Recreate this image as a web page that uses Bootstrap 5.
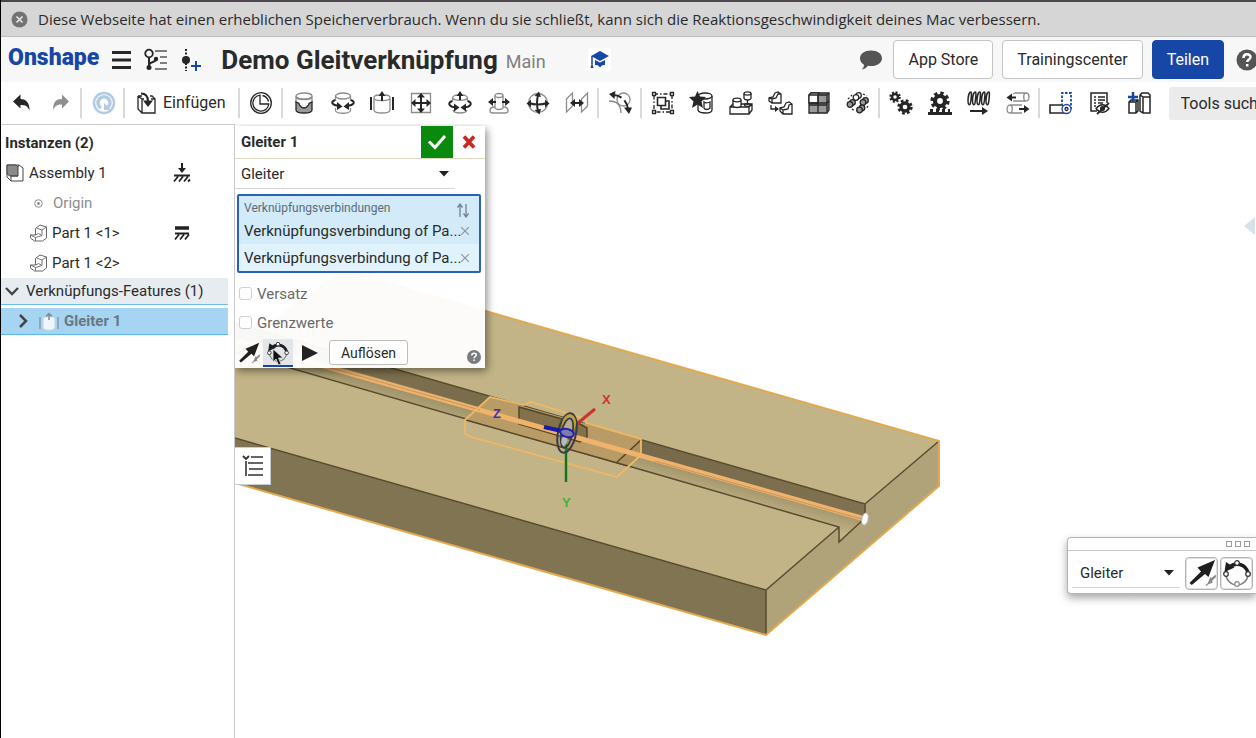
<!DOCTYPE html>
<html lang="de">
<head>
<meta charset="utf-8">
<meta name="viewport" content="width=device-width, initial-scale=1">
<title>Demo Gleitverknüpfung – Onshape</title>
<link href="https://cdn.jsdelivr.net/npm/bootstrap@5.3.0/dist/css/bootstrap.min.css" rel="stylesheet">
<style>
  :root { --ink: #2a2a2a; --blue: #1747a6; --line: #c9c9c9; }
  body { font-family: Roboto, "Liberation Sans", sans-serif; font-size: 15px; line-height: 20px; color: var(--ink); border-left: 1px solid #000; }
  svg { display: block; flex: none; fill: none; }
  button { color: inherit; }
  .ico { width: 24px; height: 24px; overflow: visible; stroke: #262626; stroke-width: 1.3; }
  .ico .g { stroke: #8c8c8c; }
  .ico .b { stroke: var(--blue); }
  .ico .f { fill: #262626; stroke: none; }
  .ico .w { fill: #fff; }
  .ico .s { fill: #9a9a9a; }
  .ico .k { stroke-width: 2; }
  .bare { border: 0; background: none; padding: 0; }

  .notice { border-top: 2px solid #4b474b; border-bottom: 1px solid #bdbdbd; background: #d6d6d6; height: 37px; font-family: "Open Sans", "Liberation Sans", sans-serif; font-size: 15px; padding-left: 10px; gap: 10px; }
  .topbar { background: #f7f7f7; height: 45px; padding-left: 7px; }
  .brand { font-weight: 900; font-size: 23px; line-height: 28px; padding-bottom: 4px; color: var(--blue); text-decoration: none; }
  .menu-btns { gap: 12px; margin-left: 13px; }
  .doc-title { font-size: 26px; line-height: 32px; font-weight: 700; margin-left: 17px; }
  .branch { font-size: 18px; color: #808080; }
  .top-actions { gap: 9px; }
  .top-btn { font-size: 16px; line-height: 24px; height: 39px; padding: 0 14px; border: 1px solid #c4c4c4; border-radius: 4px; background: #fff; color: var(--ink); }
  .top-btn.main { background: var(--blue); border-color: var(--blue); color: #fff; }
  .help-btn { padding-left: 3px; }
  .cap { width: 23px; height: 23px; background: #fff; border-radius: 3px; margin-left: 42px; }

  .tools { height: 42px; background: #fff; padding-left: 1px; }
  .tool { width: 39px; height: 36px; flex: none; }
  .tool-wide { width: auto; padding: 0 12px 0 8px; gap: 4px; font-size: 16px; }
  .sep { width: 4px; height: 30px; flex: none; border-left: 2px solid #d9d9d9; }
  .find { min-width: 0; height: 33px; margin-left: 10px; padding: 0 0 0 12px; border: 0; border-radius: 3px 0 0 3px; background: #ebebeb; font-size: 16px; }
  .find::placeholder { color: var(--ink); opacity: 1; }

  .side { width: 234px; flex: none; border-top: 1px solid var(--line); border-right: 1px solid var(--line); background: #fff; padding-top: 2px; }
  .tree-row { height: 30px; margin-right: 6px; }
  .tree-row.head { height: 31px; }
  .tree-row.inner { padding-left: 28px; }
  .tree-row.origin { padding-left: 33px; gap: 10px; }
  .tree-row.section { height: 27px; background: #e7ecf1; border-bottom: 1px solid #6cbef0; padding-left: 3px; gap: 6px; }
  .tree-row.picked { height: 27px; background: #a5d5f3; border-bottom: 1px solid #5ab9ea; margin-top: 3px; padding-left: 15px; gap: 5px; font-weight: 700; color: #6a7681; }
  .tree-row .mark-end { margin-left: auto; margin-right: 37px; }
  .dim { color: #8d8d8d; }

  .stage { min-width: 0; background: #fff; }
  .scene { width: 100%; height: 100%; }
  .scene text { font-family: "Liberation Sans", sans-serif; font-weight: 700; font-size: 13px; }

  .dialog { left: 0; top: 2px; width: 250px; background: rgba(255,255,255,.95); box-shadow: 2px 3px 8px rgba(0,0,0,.45); font-size: 15px; }
  .dialog-head { height: 33px; border-bottom: 1px solid #e3d9c2; padding-left: 6px; font-weight: 700; }
  .ok-btn { width: 32px; height: 32px; background: #0a8a0d; }
  .no-btn { width: 32px; height: 32px; }
  .pick { border: 0; border-bottom: 1px solid #d6d6d6; border-radius: 0; background: transparent; appearance: none; color: var(--ink); font-size: 15px; line-height: 20px; width: 100%; }
  .pick-wrap .caret { position: absolute; right: 6px; top: 50%; margin-top: -3px; pointer-events: none; }
  .dialog .pick-wrap { width: 220px; }
  .dialog .pick { height: 30px; padding: 0 20px 0 6px; }
  .picks { margin: 5px 4px 0 2px; border: 2px solid #2c5fb8; border-radius: 2px; background: #d3ebf9; }
  .picks-head { font-size: 12px; line-height: 20px; height: 21px; padding: 3px 10px 0 5px; color: #5d6a75; }
  .picks-row { height: 27px; padding: 0 10px 0 5px; white-space: nowrap; }
  .picks-row.alt { background: #e0f3fd; }
  .opts { margin-top: 6px; }
  .opt { height: 29px; padding-left: 4px; gap: 5px; color: #696969; }
  .opt .form-check-input { width: 13px; height: 13px; margin: 0; border-color: #cfcfcf; border-radius: 3px; }
  .foot { height: 31px; }
  .foot-btn { width: 28px; height: 28px; }
  .foot-btn.on { background: #e2e5ea; border-bottom: 2px solid var(--blue); width: 30px; }
  .pointer { left: 9px; top: 9px; }
  .play-btn { margin: 0 11px 0 9px; }
  .solve { height: 25px; padding: 0 11px; border: 1px solid #bdbdbd; border-radius: 3px; background: #fff; font-size: 14px; }
  .list-tab { left: 0; top: 323px; width: 36px; height: 38px; background: #fff; border: 1px solid #c8ccd4; border-left: 0; }
  .collapse-tab { right: 1px; top: 93px; }
  .floater { right: 0; bottom: 144px; width: 189px; background: #fff; border: 1px solid #b5b5b5; border-right: 0; border-radius: 4px 0 0 4px; box-shadow: 0 4px 9px rgba(0,0,0,.35); }
  .grip { height: 13px; border-bottom: 1px solid #c6c6c6; gap: 3px; padding-right: 6px; }
  .grip i { width: 6px; height: 6px; border: 1px solid #9a9a9a; }
  .floater-body { height: 42px; padding: 2px 0 0 4px; gap: 2px; }
  .floater .pick-wrap { width: 108px; margin-right: 3px; }
  .floater .pick { height: 30px; padding: 0 20px 0 8px; }
  .sq-btn { width: 33px; height: 33px; flex: none; border: 1px solid #b4b4b4; border-radius: 4px; background: #fff; box-shadow: inset 0 0 0 1px #e2e2e2; }
</style>
</head>
<body class="vh-100 d-flex flex-column overflow-hidden">

<svg width="0" height="0" class="position-absolute" aria-hidden="true">
  <symbol id="part" viewBox="0 0 18 18"><path d="M1 11h5V4.500L10.500 1 17 3v11l-4 3H5L1 14z" fill="#fff" stroke="#666"/><path d="M1 11l5 2.500 6.500-2V6L17 3M12.500 6L7 4M6 13.500V17M6 11l3-1.500 3.500 2" stroke="#777"/></symbol>
  <symbol id="drag" viewBox="0 0 28 28"><path d="M1.500 24L13 12.500 9.500 8.500 27 1l-6.500 17L17 15 3.800 26z" fill="#1f1f1f"/><path d="M27.500 15.500l-4 3.500-1-1-3 6.500-2 1.500 1 1 1.500-1.500 5-2-1-1.500 4-4z" fill="#8a8a8a"/></symbol>
  <symbol id="spin" viewBox="0 0 28 28"><circle cx="14" cy="15" r="11" stroke="#808080" stroke-width="1.500" fill="none"/><path d="M6 9A11 11 0 0 1 25 14" stroke="#1f1f1f" stroke-width="3.500" fill="none"/><path d="M1.500 13L3 3l8.500 5.500z" fill="#1f1f1f"/><g fill="#fff" stroke="#333" stroke-width="1.200"><circle cx="14" cy="4" r="2.300"/><circle cx="25" cy="15" r="2.300"/><circle cx="3" cy="15" r="2.300"/><circle cx="14" cy="25" r="2.300" stroke="#888"/></g></symbol>
  <symbol id="gear" viewBox="-12 -12 24 24"><circle r="6" fill="none" stroke="#262626" stroke-width="5"/><circle r="9.300" fill="none" stroke="#262626" stroke-width="4.500" stroke-dasharray="3.950 3.350"/></symbol>
</svg>

<div class="notice d-flex align-items-center flex-shrink-0" role="status">
  <button class="bare" aria-label="Hinweis schließen"><svg width="17" height="17" viewBox="0 0 17 17"><circle cx="8.500" cy="8.500" r="8" fill="#737373"/><path d="M5.500 5.500l6 6M11.500 5.500l-6 6" stroke="#e8e8e8" stroke-width="1.600"/></svg></button>
  <span class="text-nowrap">Diese Webseite hat einen erheblichen Speicherverbrauch. Wenn du sie schließt, kann sich die Reaktionsgeschwindigkeit deines Mac verbessern.</span>
</div>

<header class="topbar d-flex align-items-center flex-shrink-0">
  <a href="#" class="brand">Onshape</a>
  <div class="menu-btns d-flex align-items-center">
    <button class="bare" aria-label="Menü"><svg width="20" height="20" viewBox="0 0 20 20"><path d="M0 2.500h19M0 10h19M0 17.500h19" stroke="#262626" stroke-width="3"/></svg></button>
    <button class="bare" aria-label="Versionen"><svg class="ico" viewBox="0 0 24 24"><circle cx="5" cy="5.500" r="3.800" stroke-width="1.800"/><path class="k" d="M5 9v10M5 17c1-4 7-2 7-6"/><circle class="f" cx="5" cy="19.500" r="2.500"/><circle class="f" cx="12" cy="11" r="2.200"/><path stroke-width="1.600" stroke="#555" d="M11 3h12M16 9h7M16 15h7M11 21h12"/></svg></button>
    <button class="bare" aria-label="Version erstellen"><svg class="ico" viewBox="0 0 24 24"><path class="k" stroke-dasharray="2 1.500" d="M6 1v22"/><circle class="f" cx="6" cy="12" r="4"/><path class="b k" d="M16 13v10M11 18h10"/></svg></button>
  </div>
  <span class="doc-title text-nowrap">Demo Gleitverknüpfung</span>
  <span class="branch ms-2 pt-1">Main</span>
  <button class="bare cap d-flex align-items-center justify-content-center" aria-label="Lernen"><svg width="20" height="18" viewBox="0 0 20 18"><path d="M11 0l9 5-9 5-9-5z" fill="#1747a6"/><path d="M6 9v5c2 0 3 0 5 2.500 2-2.500 3-2.500 5-2.500V9l-5 2.500z" fill="#1747a6"/><path d="M3 5v8" stroke="#1747a6" stroke-width="1.500"/><path d="M3 11l1.500 6h-3z" fill="#1747a6"/></svg></button>
  <div class="top-actions d-flex align-items-center ms-auto flex-shrink-0">
    <button class="bare" aria-label="Kommentare"><svg width="26" height="22" viewBox="0 0 26 22"><path d="M13 1.500c6.500 0 11 3.300 11 7.800s-4.500 7.800-11 7.800c-1 0-2-.1-3-.3-1.500 2-3.500 3.300-6 3.700 1.300-1.500 2-3 2-4.700C3.500 14.300 2 12 2 9.300 2 4.800 6.500 1.500 13 1.500z" fill="#555"/></svg></button>
    <button class="btn top-btn">App Store</button>
    <button class="btn top-btn">Trainingscenter</button>
    <button class="btn top-btn main">Teilen</button>
    <button class="bare help-btn" aria-label="Hilfe"><svg width="20" height="22" viewBox="0 0 20 22"><circle cx="11" cy="11" r="10.500" fill="#555"/><path d="M7.500 9c0-5 7-4.500 7-1 0 2.500-3.300 2.500-3.300 5M11.200 15v2.500" stroke="#fff" stroke-width="2.500"/></svg></button>
  </div>
</header>

<nav class="tools d-flex align-items-center flex-shrink-0" aria-label="Werkzeuge">
  <button class="bare tool d-flex align-items-center justify-content-center" aria-label="Rückgängig"><svg class="ico" viewBox="0 0 24 24"><path class="f" d="M3 10.500L10.500 3.500V8c6 0 9 4 9 11.500-2-4.500-4-5.500-9-5.500v3.500z"/></svg></button>
  <button class="bare tool d-flex align-items-center justify-content-center" aria-label="Wiederholen"><svg class="ico" viewBox="0 0 24 24"><path fill="#8f8f8f" stroke="none" d="M20 10.500L13 3.500v4.500c-6 0-9 3-9 11 2-4 4-5.500 9-5.500v4z"/></svg></button>
  <span class="sep"></span>
  <button class="bare tool d-flex align-items-center justify-content-center" aria-label="Aktualisieren"><svg class="ico" viewBox="0 0 24 24"><circle cx="12" cy="12" r="10" stroke="#b2cbe2" stroke-width="2.500"/><path d="M9 17a6 6 0 1 1 6 0" stroke="#b2cbe2" stroke-width="3.500"/><path d="M12 12v7h7z" fill="#b2cbe2" stroke="none"/></svg></button>
  <span class="sep"></span>
  <button class="bare tool tool-wide d-flex align-items-center"><svg class="ico" viewBox="0 0 24 24"><path d="M3 5v13l4 4h13V8l-3-3h-2M3 5l4 3v14M3 5h4M7 8h2M16 8h4"/><path class="k" d="M6 2.500c5 0 7 3 7 8"/><path class="f" d="M8 9.500h10L13 16z"/></svg>Einfügen</button>
  <span class="sep"></span>
  <button class="bare tool d-flex align-items-center justify-content-center" aria-label="Verknüpfung"><svg class="ico" viewBox="0 0 24 24"><circle cx="12" cy="12" r="10.300"/><path d="M11 4.200a8 8 0 1 0 8.800 8.800H11z"/><path d="M13.500 4.500a8 8 0 0 1 6 6"/></svg></button>
  <span class="sep"></span>
  <button class="bare tool d-flex align-items-center justify-content-center" aria-label="Befestigt"><svg class="ico" viewBox="0 0 24 24"><path class="g" d="M4 5v7M20 5v7M4 6c0 3.500 16 3.500 16 0"/><ellipse class="g" cx="12" cy="5" rx="8" ry="3"/><path class="s" d="M4 11v8c0 4 16 4 16 0v-8l-3 1.500c0 2-1 2-2 3-1 2-5 2-6 0-1-1-2-1-2-3z"/></svg></button>
  <button class="bare tool d-flex align-items-center justify-content-center" aria-label="Drehen"><svg class="ico" viewBox="0 0 24 24"><g class="g"><ellipse cx="12" cy="5" rx="7.500" ry="3"/><path d="M4.500 5v5M19.500 5v5M4.500 17v3c2 3 13 3 15 0v-3"/></g><path class="k" d="M4 9c-5 2-3 5 4 6M20 9c5 2 3 5-4 6"/><path class="f" d="M6 11v8l5.500-3.500zM18 11v8l-5.500-3.500z"/></svg></button>
  <button class="bare tool d-flex align-items-center justify-content-center" aria-label="Gleiter"><svg class="ico" viewBox="0 0 24 24"><path class="g" d="M9 4c-3 0-5 1-5 3v12c0 4 16 4 16 0V7c0-2-2-3-5-3M4 7c0 3.500 16 3.500 16 0"/><path class="k" d="M1 6v13M23 6v13M12 3v7"/><path class="f" d="M8.500 5L12 0l3.500 5z"/></svg></button>
  <button class="bare tool d-flex align-items-center justify-content-center" aria-label="Planar"><svg class="ico" viewBox="0 0 24 24"><path class="g" d="M2.500 2.500h19v19h-19z"/><path class="k" d="M12 5v14M5 12h14"/><path class="f" d="M8 6.500L12 2l4 4.500zM8 17.500l4 4.500 4-4.500zM6.500 8L2 12l4.500 4zM17.500 8l4.500 4-4.500 4z"/></svg></button>
  <button class="bare tool d-flex align-items-center justify-content-center" aria-label="Zylindrisch"><svg class="ico" viewBox="0 0 24 24"><g class="g"><path d="M4.500 11V7c0-2 3-3 5-3M19.500 11V7c0-2-3-3-5-3M4.500 7c1 3 14 3 15 0M5 19c1 4 13 4 14 0"/></g><path class="k" d="M4 10c-5 2-3 6 4 6.500M20 10c5 2 3 6-4 6.500M12 4v5"/><path class="f" d="M6 12.500v8l5.500-4zM18 12.500v8l-5.500-4zM8.500 5L12 0l3.500 5z"/></svg></button>
  <button class="bare tool d-flex align-items-center justify-content-center" aria-label="Stiftschlitz"><svg class="ico" viewBox="0 0 24 24"><g class="g"><ellipse cx="12" cy="4.500" rx="4" ry="2"/><path d="M8 4.500V17c1 2 7 2 8 0V4.500M8 16H6c-4 1-4 6 0 6h12c4 0 4-5 0-6h-2"/></g><path class="k" d="M4 11h5M15 11h5"/><path class="f" d="M6 7l-5 4 5 4zM18 7l5 4-5 4z"/></svg></button>
  <button class="bare tool d-flex align-items-center justify-content-center" aria-label="Kugel"><svg class="ico" viewBox="0 0 24 24"><circle class="g" cx="12" cy="12" r="9.500"/><path class="k" d="M12.500 3c-2 5-2 13 0 18M3 12c5 2 13 2 18 0"/><path class="f" d="M8.500 5L13 .5 15 6zM8.500 19l5 4.500L15 18zM5 8.500L.5 12.500 5 16.500zM19 8.500l4.500 4-4.500 4z"/></svg></button>
  <button class="bare tool d-flex align-items-center justify-content-center" aria-label="Parallel"><svg class="ico" viewBox="0 0 24 24"><path class="g" d="M1.500 21V8l6-6v13zM16.500 21V8l6-6v13z"/><path class="k" d="M8 12h8"/><path class="f" d="M10 8v8l-5-4zM14 8v8l5-4z"/></svg></button>
  <span class="sep"></span>
  <button class="bare tool d-flex align-items-center justify-content-center" aria-label="Tangente"><svg class="ico" viewBox="0 0 24 24"><circle class="g" cx="15.500" cy="8.500" r="6.500"/><path class="g" d="M1 10c8 0 12 4 12 12"/><path class="k" stroke-dasharray="9 4 12" d="M5 4c8 0 14 6 15 14"/><path class="f" d="M7.500 0L1 3 6.500 8zM16 16.500h8L21 23z"/></svg></button>
  <span class="sep"></span>
  <button class="bare tool d-flex align-items-center justify-content-center" aria-label="Gruppe"><svg class="ico" viewBox="0 0 24 24"><path stroke-dasharray="4 2 1.500 2" d="M3 3h18v18H3z"/><path class="w" d="M1.500 1.500h3v3h-3zM19.500 1.500h3v3h-3zM1.500 19.500h3v3h-3zM19.500 19.500h3v3h-3z"/><path class="w" stroke-width="1.600" d="M6.500 6.500h8v8h-8z"/><path stroke-width="1.600" d="M15 10h3v8h-8v-3"/></svg></button>
  <button class="bare tool d-flex align-items-center justify-content-center" aria-label="Verknüpfungsverbindung"><svg class="ico" viewBox="0 0 24 24"><path class="w" d="M8 5v14c1 4 14 4 14 0V5"/><ellipse class="w" cx="15" cy="5" rx="7" ry="3"/><path d="M14 11c1 1 4 1 6 0v6c-2 2-5 2-6 0z"/><path class="f" d="M7.500 0l2.500 5.500 6 .5-4.500 4.500L13 17l-5.500-3.500L2 17l1.500-6.500L-1 6l6-.5z"/></svg></button>
  <button class="bare tool d-flex align-items-center justify-content-center" aria-label="Replizieren"><svg class="ico" viewBox="0 0 24 24"><path class="w" d="M1 16l3-3h19v6l-3 4H1zM1 16h19v7M20 16l3-3"/><path class="w" d="M4 9v6c1 2 7 2 8 0V9"/><ellipse class="w" cx="8" cy="9" rx="4" ry="1.800"/><path class="w" d="M15 2.500v5c1 2 6 2 7 0v-5"/><ellipse class="w" cx="18.500" cy="2.500" rx="3.500" ry="1.600"/><path d="M18.500 9v5"/><ellipse cx="18.500" cy="14" rx="3" ry="1.300"/></svg></button>
  <button class="bare tool d-flex align-items-center justify-content-center" aria-label="Muster"><svg class="ico" viewBox="0 0 24 24"><path class="w" d="M1 7l4-1 2-4 3-1 3 2v9H4L1 10zM1 7l3 1 4-1 2-4 3 0M4 8v4"/><path class="w" d="M12 17l4-1 2-4 3-1 3 2v10h-9l-3-3zM12 17l3 2 5-1 1-4 3-1M15 19v4"/><path d="M3 14v4h5"/><path class="f" d="M7 15l4 3-4 3z"/></svg></button>
  <button class="bare tool d-flex align-items-center justify-content-center" aria-label="Lineares Muster"><svg class="ico" viewBox="0 0 24 24"><path class="s" d="M2 4l2-2h18v17l-2 3H2z"/><path class="w" d="M2 4l2-2h8L11 4v8H2z"/><path d="M2 12h18l2-2M11 4v18M20 4v18M2 4h18l2-2M2 14h18" /></svg></button>
  <button class="bare tool d-flex align-items-center justify-content-center" aria-label="Kreismuster"><svg class="ico" viewBox="0 0 24 24"><g class="s"><circle cx="6.500" cy="11.500" r="2.800"/><circle cx="4" cy="13.500" r="2.800"/><circle cx="19.500" cy="9.500" r="2.800"/><circle cx="17" cy="11.500" r="2.800"/><circle cx="16" cy="17" r="2.800"/><circle cx="13.500" cy="19" r="2.800"/></g><circle class="w" cx="12.500" cy="4.500" r="2.800"/><circle class="w" cx="10" cy="6.500" r="2.800"/><path stroke-dasharray="2 2" d="M2 8l4-4M17 3l4 2M22 15l-2 3M6 18l3 2"/></svg></button>
  <span class="sep"></span>
  <button class="bare tool d-flex align-items-center justify-content-center" aria-label="Zahnradbeziehung"><svg class="ico" viewBox="0 0 24 24"><use href="#gear" x="0" y="0" width="12" height="12"/><use href="#gear" x="8" y="8" width="16" height="16"/></svg></button>
  <button class="bare tool d-flex align-items-center justify-content-center" aria-label="Zahnstange"><svg class="ico" viewBox="0 0 24 24"><use href="#gear" x="2" y="0" width="20" height="20"/><path class="f" d="M0 24v-3h2v-3h3v3h3v-3h3v3h3v-3h3v3h3v-3h2v3h2v3z"/></svg></button>
  <button class="bare tool d-flex align-items-center justify-content-center" aria-label="Schraube"><svg class="ico" viewBox="0 0 24 24"><path stroke-width="1.500" d="M4 1C2 1 1 6 1 10s2 5 2.500 2S5 1 4 1zM8.500 1c-2 0-3 5-3 9s2 5 2.500 2 1.500-11 .5-11zM13 1c-2 0-3 5-3 9s2 5 2.500 2S14 1 13 1zM17.500 1c-2 0-3 5-3 9s2 5 2.500 2 1.500-11 .5-11zM22 1c-2 0-3 5-3 9s2 5 2.500 2S23 1 22 1z"/><path class="k" d="M3 20h13"/><path class="f" d="M15 16l6 4-6 4z"/></svg></button>
  <button class="bare tool d-flex align-items-center justify-content-center" aria-label="Lineare Beziehung"><svg class="ico" viewBox="0 0 24 24"><g class="g"><path d="M9 2h11c4 0 4 8 0 8H7M20 2c-3 0-3 8 0 8M7 3l2-1M4 14h12M4 22h12M4 14c-4 0-4 8 0 8M4 14c3 0 3 8 0 8"/></g><path class="k" d="M5 6.500h5M13 18h6"/><path class="f" d="M6 2.500l-5.500 4L6 10.500zM18 14l5.500 4-5.500 4z"/></svg></button>
  <span class="sep"></span>
  <button class="bare tool d-flex align-items-center justify-content-center" aria-label="Stückliste"><svg class="ico" viewBox="0 0 24 24"><path stroke-width="1.600" d="M15 22H1v-8h13"/><path class="b" stroke-width="1.800" stroke-dasharray="2.500 1.500" d="M13 15V2h9v16"/><circle cx="17.500" cy="18" r="4.500" class="w b"/><circle cx="17.500" cy="18" r="1.500"/></svg></button>
  <button class="bare tool d-flex align-items-center justify-content-center" aria-label="Ansicht"><svg class="ico" viewBox="0 0 24 24"><path stroke-width="1.500" d="M9 20H3V2h16v10"/><path d="M6 6h2M10 6h7M6 9h2M10 9h7M6 12h2M10 12h5M6 15h2"/><path class="w" d="M8 17.500c4-5 9-5 13 0-4 5-9 5-13 0z"/><circle class="f" cx="14.500" cy="17.500" r="2.500"/><path stroke-width="1.700" d="M9 23L21 12"/></svg></button>
  <button class="bare tool d-flex align-items-center justify-content-center" aria-label="Explosionsansicht"><svg class="ico" viewBox="0 0 24 24"><path class="w" stroke-width="1.500" d="M2 11l2-2h7v11l-2 2H2zM9 11v11M2 11h7l2-2M13 4l2-2h6l2 2v18h-7l-3-2zM13 4l3 2v16M16 6h7"/><path class="b" stroke-width="2.500" d="M6 1v10M1 6h10"/></svg></button>
  <input class="find flex-grow-1" type="text" placeholder="Tools suchen…" aria-label="Tools suchen">
</nav>

<main class="d-flex flex-grow-1 overflow-hidden">
  <aside class="side">
    <div class="tree-row head d-flex align-items-center fw-bold ps-1">Instanzen (2)</div>
    <div class="tree-row d-flex align-items-center ps-1 gap-1">
      <svg width="20" height="20" viewBox="0 0 20 20"><path d="M2 2h12l4 3v13H6l-4-4z" fill="#fff" stroke="#444"/><path d="M2 2h9l2 2v9H5l-3-2z" fill="#8a8a8a" stroke="#444"/><path d="M14 2l-1 2M13 13l-7 0v5" stroke="#444"/></svg>
      <span>Assembly 1</span>
      <svg class="mark-end" width="18" height="20" viewBox="0 0 18 20"><path d="M9 0v6" stroke="#222" stroke-width="2"/><path d="M5 5h8l-4 5z" fill="#222"/><path d="M1 12.500h16M1 18.500l4-5M6 18.500l4-5M11 18.500l4-5M15 18.500l2-2" stroke="#222" stroke-width="1.800"/></svg>
    </div>
    <div class="tree-row origin d-flex align-items-center dim"><svg width="9" height="9" viewBox="0 0 9 9"><circle cx="4.500" cy="4.500" r="3.800" stroke="#8d8d8d"/><circle cx="4.500" cy="4.500" r="1.400" fill="#8d8d8d"/></svg><span>Origin</span></div>
    <div class="tree-row inner d-flex align-items-center gap-1">
      <svg width="19" height="18"><use href="#part"/></svg><span>Part 1 &lt;1&gt;</span>
      <svg class="mark-end" width="18" height="16" viewBox="0 0 18 16"><path d="M2 3h14" stroke="#222" stroke-width="3.500"/><path d="M2 8.500h14M2 14.500l4-5M7 14.500l4-5M12 14.500l4-5" stroke="#222" stroke-width="1.800"/></svg>
    </div>
    <div class="tree-row inner d-flex align-items-center gap-1"><svg width="19" height="18"><use href="#part"/></svg><span>Part 1 &lt;2&gt;</span></div>
    <div class="tree-row section d-flex align-items-center"><svg width="16" height="10" viewBox="0 0 16 10"><path d="M2 2l6 6 6-6" stroke="#444" stroke-width="2.300"/></svg><span class="text-nowrap">Verknüpfungs-Features (1)</span></div>
    <div class="tree-row picked d-flex align-items-center"><svg width="14" height="14" viewBox="0 0 14 14"><path d="M4 1l6 6-6 6" stroke="#444" stroke-width="2.500"/></svg>
      <svg class="ms-1" width="20" height="20" viewBox="0 0 20 20"><path d="M4 7v10c1 3 11 3 12 0V7c-2-2-10-2-12 0z" fill="#eef6fb" stroke="#c8d4dc"/><path d="M1 6v12M19 6v12" stroke="#8a99a5" stroke-width="1.500"/><path d="M10 9V3M7 5.500l3-3 3 3" stroke="#7d8a94" stroke-width="1.500"/></svg><span>Gleiter 1</span></div>
  </aside>

  <section class="stage flex-grow-1 position-relative overflow-hidden" aria-label="Grafikbereich">
    <svg class="scene" viewBox="235 124 1021 614" preserveAspectRatio="xMinYMin slice">
      <defs>
        <linearGradient id="wall" x1="0" y1="0" x2="1" y2="0"><stop offset="0" stop-color="#82744f"/><stop offset=".6" stop-color="#75684a"/><stop offset="1" stop-color="#807250"/></linearGradient>
        <linearGradient id="floor" gradientUnits="userSpaceOnUse" x1="600" y1="444" x2="594" y2="466"><stop offset="0" stop-color="#9f9269"/><stop offset="1" stop-color="#c2b385"/></linearGradient>
      </defs>
      <path d="M200 372L342 270 939 441 766 590 200 428z" fill="#c2b486"/>
      <path d="M200 428L766 590V635L200 473z" fill="#817453"/>
      <path d="M766 590L939 441V486L766 635z" fill="#b0a37a"/>
      <path d="M235 323L865 504V518L839 542V527L235 352z" fill="url(#floor)"/>
      <path d="M235 323L865 504V518L235 337z" fill="url(#wall)"/>
      <path d="M865 504V518L839 542V527L235 352M235 323L865 504 939 441M766 635V590L200 428M766 590L839 527" stroke="#584b2f" stroke-width="1.500"/>
      <path d="M342 270L939 441V486L766 635 200 473" stroke="#e3a94f" stroke-width="2"/>
      <path d="M490 397L641 439 617 463 466 420z" fill="#b99b66"/>
      <path d="M617 463L641 439V455L628 466z" fill="#ad925e"/>
      <path d="M519 407L580 424 587 428V437L580 442 519 424z" fill="#83714b" stroke="#544528" stroke-width="1.500"/>
      <path d="M466 420L628 466M617 462L641 440" stroke="#55452b" stroke-width="1.500"/>
      <path d="M235 341L865 519" stroke="#efb36c" stroke-width="5"/>
      <path d="M235 341L480 410M655 461L865 520" stroke="#c9935b" stroke-width="1"/>
      <path d="M490 397L465 420V434L471 437 617 477 641 455V439L586 423V419L531 402 523 405z" stroke="#f0b765" stroke-width="1.800"/>
      <ellipse cx="865" cy="519" rx="3" ry="6" transform="rotate(12 865 519)" fill="#fff" stroke="#b9c0cc"/>
      <path d="M567 432L595 409" stroke="#c93430" stroke-width="3"/>
      <path d="M566 436V482" stroke="#168f1c" stroke-width="2.500"/><path d="M566 451V482" stroke="#0b5c18" stroke-width="1"/>
      <g transform="rotate(12 567 433)"><ellipse cx="567" cy="433" rx="9" ry="20" stroke="#363c46" stroke-width="2"/><ellipse cx="567" cy="424" rx="6" ry="9" fill="#b5ad96" stroke="#bca12b" stroke-width="2"/><ellipse cx="567" cy="433" rx="5.500" ry="15" stroke="#363c46" stroke-width="1.800"/><ellipse cx="566" cy="441" rx="3" ry="5" fill="#b9b8bc"/></g>
      <path d="M544 427L566 432" stroke="#1a1aa6" stroke-width="4"/><ellipse cx="567" cy="433" rx="7" ry="4" transform="rotate(15 567 433)" stroke="#1d22b5" stroke-width="2" fill="#7f7da8"/>
      <text x="602" y="404" fill="#cf3330">X</text><text x="562" y="507" fill="#36b93a">Y</text><text x="493" y="418" fill="#4a2bb5">Z</text>
    </svg>

    <form class="dialog position-absolute">
      <div class="dialog-head d-flex align-items-center"><span class="me-auto">Gleiter 1</span>
        <button type="button" class="bare ok-btn d-flex align-items-center justify-content-center" aria-label="Übernehmen"><svg width="20" height="16" viewBox="0 0 20 16"><path d="M2 7.500l6 6L18 2" stroke="#fff" stroke-width="3"/></svg></button>
        <button type="button" class="bare no-btn d-flex align-items-center justify-content-center" aria-label="Abbrechen"><svg width="14" height="14" viewBox="0 0 14 14"><path d="M2 1.500l10 11M12 1.500L2 12.500" stroke="#c8281e" stroke-width="3.600"/></svg></button>
      </div>
      <div class="pick-wrap position-relative"><select class="pick" aria-label="Verknüpfungstyp"><option>Gleiter</option></select><svg class="caret" width="10" height="6" viewBox="0 0 10 6"><path d="M0 0h10L5 5.500z" fill="#222"/></svg></div>
      <div class="picks">
        <div class="picks-head d-flex align-items-center justify-content-between"><span>Verknüpfungsverbindungen</span>
          <button type="button" class="bare pt-1" aria-label="Reihenfolge tauschen"><svg width="12" height="15" viewBox="0 0 12 15"><path d="M3 14V2M.5 4.500L3 1l2.500 3.500M9 1v12M6.500 10.500L9 14l2.500-3.500" stroke="#74808b" stroke-width="1.300"/></svg></button></div>
        <div class="picks-row d-flex align-items-center justify-content-between"><span>Verknüpfungsverbindung of Pa...</span><button type="button" class="bare" aria-label="Entfernen"><svg width="8" height="8" viewBox="0 0 8 8"><path d="M0 0l8 8M8 0L0 8" stroke="#8b98a3" stroke-width="1.200"/></svg></button></div>
        <div class="picks-row alt d-flex align-items-center justify-content-between"><span>Verknüpfungsverbindung of Pa...</span><button type="button" class="bare" aria-label="Entfernen"><svg width="8" height="8" viewBox="0 0 8 8"><path d="M0 0l8 8M8 0L0 8" stroke="#8b98a3" stroke-width="1.200"/></svg></button></div>
      </div>
      <div class="opts">
        <div class="opt d-flex align-items-center"><input class="form-check-input" type="checkbox" id="versatz"><label for="versatz">Versatz</label></div>
        <div class="opt d-flex align-items-center"><input class="form-check-input" type="checkbox" id="grenzwerte"><label for="grenzwerte">Grenzwerte</label></div>
      </div>
      <div class="foot d-flex align-items-center">
        <button type="button" class="bare foot-btn d-flex align-items-center justify-content-center" aria-label="Ausrichtung umkehren"><svg width="22" height="22"><use href="#drag"/></svg></button>
        <button type="button" class="bare foot-btn on d-flex align-items-center justify-content-center position-relative" aria-label="Drehung">
          <svg width="22" height="22"><use href="#spin"/></svg>
          <svg class="pointer position-absolute" width="12" height="18" viewBox="0 0 12 18"><path d="M1 1v13l3-3 2.500 6 2.500-1-2.500-6H11z" fill="#111" stroke="#ddd" stroke-width=".8"/></svg></button>
        <button type="button" class="bare play-btn" aria-label="Abspielen"><svg width="16" height="16" viewBox="0 0 16 16"><path d="M0 0l16 8-16 8z" fill="#222"/></svg></button>
        <button type="button" class="solve">Auflösen</button>
        <button type="button" class="bare ms-auto me-1 pt-2" aria-label="Hilfe"><svg width="14" height="14" viewBox="0 0 14 14"><circle cx="7" cy="7" r="7" fill="#7a7d80"/><path d="M4.800 5.500c0-3 4.500-2.800 4.500-.5 0 1.500-2.200 1.500-2.200 3.200M7.100 9.500v1.500" stroke="#fff" stroke-width="1.500"/></svg></button>
      </div>
    </form>

    <button class="bare list-tab position-absolute d-flex align-items-center justify-content-center" aria-label="Featureliste"><svg width="22" height="22" viewBox="0 0 22 22"><path d="M1 1l3 3 3-3" stroke="#333" stroke-width="1.800"/><path d="M4 6v15M9 2h12M6 8h15M7 14h14M6 20h15" stroke="#333" stroke-width="1.600"/></svg></button>
    <button class="bare collapse-tab position-absolute" aria-label="Seitenleiste öffnen"><svg width="11" height="18" viewBox="0 0 11 18"><path d="M11 0v18L0 9z" fill="#d5e2ec"/></svg></button>

    <div class="floater position-absolute overflow-hidden">
      <div class="grip d-flex align-items-center justify-content-end"><i></i><i></i><i></i></div>
      <div class="floater-body d-flex align-items-center">
        <div class="pick-wrap position-relative flex-shrink-0"><select class="pick" aria-label="Typ"><option>Gleiter</option></select><svg class="caret" width="10" height="6" viewBox="0 0 10 6"><path d="M0 0h10L5 5.500z" fill="#222"/></svg></div>
        <button class="bare sq-btn d-flex align-items-center justify-content-center" aria-label="Ziehen"><svg width="28" height="28"><use href="#drag"/></svg></button>
        <button class="bare sq-btn d-flex align-items-center justify-content-center" aria-label="Drehen"><svg width="28" height="28"><use href="#spin"/></svg></button>
      </div>
    </div>
  </section>
</main>
<script src="https://cdn.jsdelivr.net/npm/bootstrap@5.3.0/dist/js/bootstrap.bundle.min.js"></script>
</body>
</html>
